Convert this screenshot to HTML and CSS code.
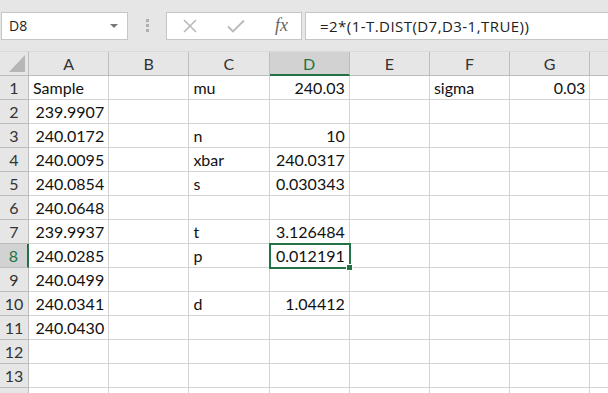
FILE: index.html
```html
<!DOCTYPE html>
<html lang="en">
<head>
  <meta charset="UTF-8" />
  <title>T.DIST sheet</title>
  <link rel="stylesheet" href="styles.css">
</head>
<body>

  <!-- formula bar -->
  <div class="formula-bar">
    <div class="name-box">
      <span>D8</span>
      <span class="caret"></span>
    </div>
    <div class="grip"><i></i><i></i><i></i></div>
    <div class="fx-buttons">
      <svg class="btn-x" width="14" height="14" viewBox="0 0 14 14"><path d="M1 1L13 13M13 1L1 13" stroke="#b9b9b9" stroke-width="1.6" fill="none"/></svg>
      <svg class="btn-ok" width="18" height="14" viewBox="0 0 18 14"><path d="M1 7.5L6 12.5L17 1.5" stroke="#b9b9b9" stroke-width="1.8" fill="none"/></svg>
      <span class="fx">fx</span>
    </div>
    <div class="formula">=2*(1-T.DIST(D7,D3-1,TRUE))</div>
  </div>

  <!-- grid -->
  <div class="sheet" id="sheet"></div>

  <script>
    const cols = ['A', 'B', 'C', 'D', 'E', 'F', 'G', ''];
    const data = {
      A1: 'Sample', A2: 239.9907, A3: 240.0172, A4: 240.0095, A5: 240.0854, A6: 240.0648,
      A7: 239.9937, A8: 240.0285, A9: 240.0499, A10: 240.0341, A11: '240.0430',
      C1: 'mu', D1: 240.03, F1: 'sigma', G1: 0.03,
      C3: 'n', D3: 10,
      C4: 'xbar', D4: 240.0317,
      C5: 's', D5: 0.030343,
      C7: 't', D7: 3.126484,
      C8: 'p', D8: 0.012191,
      C10: 'd', D10: 1.04412
    };
    const active = { col: 'D', row: 8 };
    const sheet = document.getElementById('sheet');

    function cell(cls, text) {
      const el = document.createElement('div');
      el.className = cls;
      if (text !== undefined) el.textContent = text;
      sheet.appendChild(el);
      return el;
    }

    cell('corner');
    cols.forEach(c => cell('col-head' + (c === active.col ? ' on' : ''), c));

    for (let r = 1; r <= 14; r++) {
      cell('row-head' + (r === active.row ? ' on' : ''), r < 14 ? r : '');
      cols.forEach(c => {
        const v = data[c + r];
        let cls = 'cell';
        if (v !== undefined) cls += (typeof v === 'number' || /^[\d.]+$/.test(v)) ? ' num' : ' txt';
        if (c === active.col && r === active.row) cls += ' selected';
        cell(cls, v === undefined ? '' : String(v));
      });
    }
  </script>
</body>
</html>
```

FILE: styles.css
```css
body {
  margin: 0;
  background: #fff;
  overflow: hidden;
  font-family: Lato, sans-serif;
}

.formula-bar {
  display: flex;
  align-items: center;
  height: 52px;
  background: #e6e6e6;
  padding: 0 0 0 1px;
  box-sizing: border-box;
  border-bottom: 1px solid #d9d9d9;
}
.name-box, .fx-buttons, .formula {
  height: 28px;
  background: #fff;
  border: 1px solid #c6c6c6;
  box-sizing: border-box;
  display: flex;
  align-items: center;
}
.name-box {
  width: 127px;
  padding: 0 9px 0 7px;
  justify-content: space-between;
  font-family: "Open Sans", sans-serif;
  font-size: 14px;
  color: #222;
}
.caret {
  border-left: 4px solid transparent;
  border-right: 4px solid transparent;
  border-top: 4px solid #777;
}
.grip {
  width: 38px;
  display: flex;
  flex-direction: column;
  align-items: center;
  gap: 2px;
}
.grip i {
  display: block;
  width: 3px;
  height: 3px;
  background: #b0b0b0;
}
.fx-buttons {
  width: 136px;
  padding: 0 15px 0 16px;
  justify-content: space-between;
}
.fx {
  font-family: "Liberation Serif", serif;
  font-style: italic;
  font-size: 18px;
  color: #666;
  margin-right: -2px;
}
.formula {
  flex: 1;
  margin-left: 3px;
  border-right: none;
  padding-left: 14px;
  font-family: "Open Sans", sans-serif;
  font-size: 15px;
  letter-spacing: 0.45px;
  color: #222;
}

.sheet {
  display: grid;
  grid-template-columns: 29px repeat(8, 80.2px);
  grid-auto-rows: 24px;
  font-size: 16px;
  color: #111;
}
.sheet > div {
  border-right: 1px solid #d4d4d4;
  border-bottom: 1px solid #d4d4d4;
  box-sizing: border-box;
  display: flex;
  align-items: center;
  white-space: nowrap;
  overflow: hidden;
  position: relative;
}
.corner, .col-head, .row-head {
  background: #e6e6e6;
  color: #333;
  justify-content: center;
}
.sheet > .corner, .sheet > .col-head, .sheet > .row-head {
  border-color: #bdbdbd;
}
.corner::after {
  content: "";
  position: absolute;
  right: 3px;
  bottom: 3px;
  border-left: 16px solid transparent;
  border-bottom: 17px solid #b6b6b6;
}
.col-head.on {
  background: #d2d2d2;
  color: #217346;
  border-bottom: 2px solid #217346;
}
.row-head.on {
  background: #d2d2d2;
  color: #217346;
  border-right: 2px solid #217346;
}
.cell.txt {
  padding-left: 4px;
}
.cell.num {
  justify-content: flex-end;
  padding-right: 4px;
}
.sheet > .selected {
  overflow: visible;
  outline: 2px solid #217346;
  outline-offset: -1px;
  z-index: 1;
}
.selected::after {
  content: "";
  position: absolute;
  right: -4px;
  bottom: -4px;
  width: 5px;
  height: 5px;
  background: #217346;
  border: 1px solid #fff;
}
```
